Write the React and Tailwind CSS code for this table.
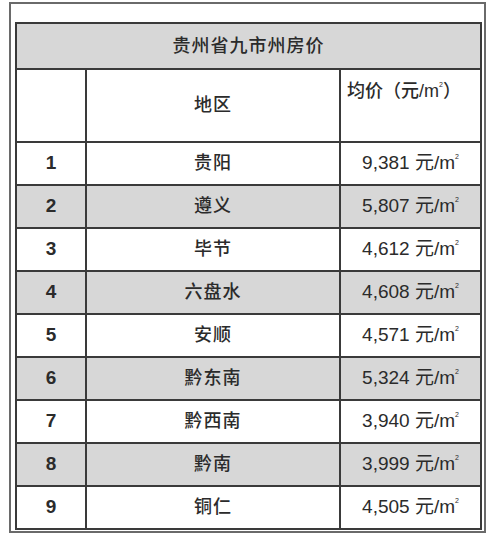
export default function App() {
  const rows = [
    ["1", "贵阳", "9,381"],
    ["2", "遵义", "5,807"],
    ["3", "毕节", "4,612"],
    ["4", "六盘水", "4,608"],
    ["5", "安顺", "4,571"],
    ["6", "黔东南", "5,324"],
    ["7", "黔西南", "3,940"],
    ["8", "黔南", "3,999"],
    ["9", "铜仁", "4,505"],
  ];
  const font = { fontFamily: '"Liberation Sans", "Noto Sans CJK SC", sans-serif' };
  return (
    <div className="w-[500px] h-[559px] bg-white pt-[2px] pl-[9px] text-[#2b2b2b]" style={font}>
      <div className="w-[477px] h-[531px] border-2 border-[#6a6a6a] px-[4px] pt-[18px]">
        <table className="w-[465px] border-collapse border-2 border-[#3a3a3a] table-fixed">
          <colgroup>
            <col className="w-[70px]" />
            <col className="w-[254px]" />
            <col className="w-[141px]" />
          </colgroup>
          <tbody>
            <tr className="h-[46px] bg-[#d7d7d7]">
              <td colSpan={3} className="border-2 border-[#3a3a3a] text-center text-[18px] font-medium tracking-[1px]">
                贵州省九市州房价
              </td>
            </tr>
            <tr className="h-[73px] bg-white">
              <td className="border-2 border-[#3a3a3a]"></td>
              <td className="border-2 border-[#3a3a3a] text-center text-[18px] font-medium tracking-[1px]">地区</td>
              <td className="border-2 border-[#3a3a3a] align-top pt-[8px] pl-[6px] text-[18px] font-medium whitespace-nowrap">
                均价（元/m<span className="inline-block text-[7px] leading-none relative -top-[10px]">2</span>）
              </td>
            </tr>
            {rows.map(([i, name, price], idx) => (
              <tr key={i} className={`h-[43px] ${idx % 2 === 1 ? "bg-[#d7d7d7]" : "bg-white"}`}>
                <td className="border-2 border-[#3a3a3a] text-center text-[19px] font-bold">{i}</td>
                <td className="border-2 border-[#3a3a3a] text-center text-[18px] font-medium tracking-[1px]">{name}</td>
                <td className="border-2 border-[#3a3a3a] text-center text-[19px] whitespace-nowrap">
                  {price} 元/m<span className="inline-block text-[7px] leading-none relative -top-[10px]">2</span>
                </td>
              </tr>
            ))}
          </tbody>
        </table>
      </div>
    </div>
  );
}
